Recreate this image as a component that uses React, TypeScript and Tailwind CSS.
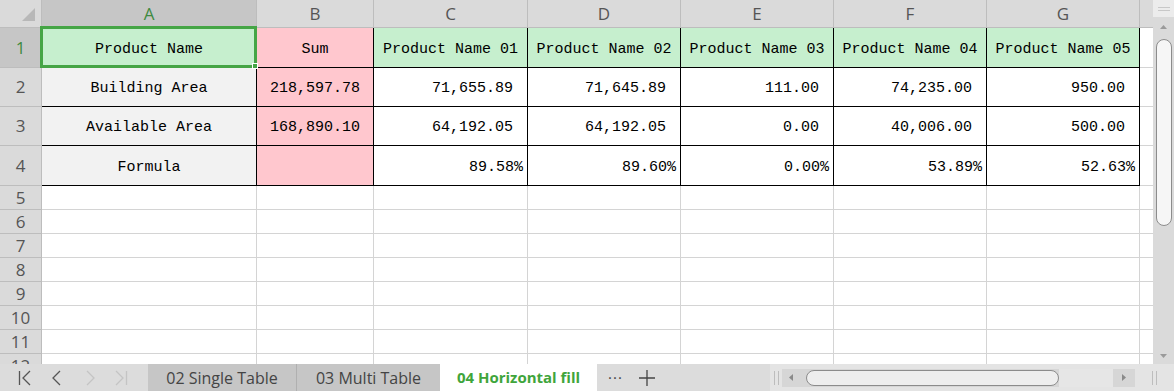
import React from "react";

const cols = [
  { key: "A", w: "w-[215px]" },
  { key: "B", w: "w-[117px]" },
  { key: "C", w: "w-[154px]" },
  { key: "D", w: "w-[153px]" },
  { key: "E", w: "w-[153px]" },
  { key: "F", w: "w-[153px]" },
  { key: "G", w: "w-[153px]" },
];

const products = ["Product Name 01", "Product Name 02", "Product Name 03", "Product Name 04", "Product Name 05"];

const dataRows = [
  { h: "h-[39px]", label: "Building Area", sum: "218,597.78", vals: ["71,655.89", "71,645.89", "111.00", "74,235.00", "950.00"], pct: false },
  { h: "h-[39px]", label: "Available Area", sum: "168,890.10", vals: ["64,192.05", "64,192.05", "0.00", "40,006.00", "500.00"], pct: false },
  { h: "h-[40px]", label: "Formula", sum: "", vals: ["89.58%", "89.60%", "0.00%", "53.89%", "52.63%"], pct: true },
];

const mono = "font-['Liberation_Mono',monospace] text-[15px] text-black pt-[5px]";
const sans = "font-['Open_Sans','Noto_Sans',sans-serif]";

function RowHead({ n, h, active }: { n: number; h: string; active?: boolean }) {
  return (
    <div
      className={`w-[42px] ${h} shrink-0 flex items-center justify-center border-r border-b border-[#bdbdbd] ${sans} text-[17px] ${
        active ? "bg-[#c6c6c6] text-[#3f8a3f]" : "bg-[#dadada] text-[#555]"
      }`}
    >
      {n}
    </div>
  );
}

function Extra({ h }: { h: string }) {
  return <div className={`flex-1 ${h} border-b border-[#d4d4d4]`} />;
}

function EmptyRow({ n }: { n: number }) {
  return (
    <div className="flex">
      <RowHead n={n} h="h-[24px]" />
      {cols.map((c) => (
        <div key={c.key} className={`${c.w} h-[24px] shrink-0 border-r border-b border-[#d4d4d4]`} />
      ))}
      <Extra h="h-[24px]" />
    </div>
  );
}

export default function App() {
  return (
    <div className="w-[1174px] h-[391px] flex flex-col bg-white overflow-hidden">
      <div className="flex h-[364px]">
        {/* Sheet grid */}
        <div className="w-[1153px] h-[364px] overflow-hidden">
          {/* Column headers */}
          <div className="flex h-[28px]">
            <div className="w-[42px] h-[28px] shrink-0 bg-[#dadada] border-r border-b border-[#bdbdbd] relative">
              <svg className="absolute left-[22px] top-[8px]" width="13" height="13" viewBox="0 0 13 13">
                <polygon points="13,0 13,13 0,13" fill="#b8b8b8" />
              </svg>
            </div>
            {cols.map((c) => (
              <div
                key={c.key}
                className={`${c.w} h-[28px] shrink-0 flex items-center justify-center border-r border-b border-[#bdbdbd] ${sans} text-[17px] ${
                  c.key === "A" ? "bg-[#c6c6c6] text-[#3f8a3f]" : "bg-[#dadada] text-[#555]"
                }`}
              >
                {c.key}
              </div>
            ))}
            <div className="flex-1 h-[28px] bg-[#dadada] border-b border-[#bdbdbd]" />
          </div>

          {/* Row 1 */}
          <div className="flex">
            <RowHead n={1} h="h-[40px]" active />
            <div className={`w-[215px] h-[40px] shrink-0 relative bg-[#c6efce] border-r border-b border-black flex items-center justify-center ${mono}`}>
              Product Name
              <div className="absolute -left-[2px] -top-[2px] w-[217px] h-[42px] border-[3px] border-[#45a545]">
                <div className="absolute -right-[4px] -bottom-[4px] w-[6px] h-[6px] bg-[#45a545] border border-white" />
              </div>
            </div>
            <div className={`w-[117px] h-[40px] shrink-0 bg-[#ffc7ce] border-r border-b border-black flex items-center justify-center ${mono}`}>
              Sum
            </div>
            {products.map((p, i) => (
              <div
                key={p}
                className={`${cols[i + 2].w} h-[40px] shrink-0 bg-[#c6efce] border-r border-b border-black flex items-center justify-center ${mono}`}
              >
                {p}
              </div>
            ))}
            <Extra h="h-[40px]" />
          </div>

          {/* Rows 2-4 */}
          {dataRows.map((r, idx) => (
            <div key={r.label} className="flex">
              <RowHead n={idx + 2} h={r.h} />
              <div className={`w-[215px] ${r.h} shrink-0 bg-[#f2f2f2] border-r border-b border-black flex items-center justify-center ${mono}`}>
                {r.label}
              </div>
              <div className={`w-[117px] ${r.h} shrink-0 bg-[#ffc7ce] border-r border-b border-black flex items-center justify-center ${mono}`}>
                {r.sum}
              </div>
              {r.vals.map((v, i) => (
                <div
                  key={i}
                  className={`${cols[i + 2].w} ${r.h} shrink-0 border-r border-b border-black flex items-center justify-end ${
                    r.pct ? "pr-[4px]" : "pr-[14px]"
                  } ${mono}`}
                >
                  {v}
                </div>
              ))}
              <Extra h={r.h} />
            </div>
          ))}

          {[5, 6, 7, 8, 9, 10, 11, 12].map((n) => (
            <EmptyRow key={n} n={n} />
          ))}
        </div>

        {/* Vertical scrollbar */}
        <div className="w-[21px] h-[364px] flex flex-col bg-[#dadada]">
          <div className="h-[17px] bg-[#ececec] flex flex-col items-center justify-center gap-[2px]">
            <div className="w-[12px] h-px bg-[#c8c8c8]" />
            <div className="w-[12px] h-px bg-[#c8c8c8]" />
          </div>
          <div className="flex-1 flex flex-col items-center pt-[8px] pb-[6px]">
            <svg width="7" height="4" viewBox="0 0 7 4">
              <polygon points="3.5,0 7,4 0,4" fill="#9a9a9a" />
            </svg>
            <div className="mt-[10px] w-[16px] h-[187px] rounded-full bg-[#f6f6f6] border border-[#8c8c8c]" />
            <div className="flex-1" />
            <svg width="7" height="4" viewBox="0 0 7 4">
              <polygon points="0,0 7,0 3.5,4" fill="#9a9a9a" />
            </svg>
          </div>
        </div>
      </div>

      {/* Sheet tabs */}
      <div className={`h-[27px] flex items-stretch bg-[#dcdcdc] ${sans}`}>
        <div className="w-[148px] flex items-center">
          <svg className="ml-[18px]" width="14" height="16" viewBox="0 0 14 16" fill="none" stroke="#555" strokeWidth="1.3">
            <path d="M1.5 1v14" />
            <path d="M12 1L5 8l7 7" />
          </svg>
          <svg className="ml-[20px]" width="9" height="16" viewBox="0 0 9 16" fill="none" stroke="#555" strokeWidth="1.3">
            <path d="M8 1L1 8l7 7" />
          </svg>
          <svg className="ml-[25px]" width="9" height="16" viewBox="0 0 9 16" fill="none" stroke="#c4c4c4" strokeWidth="1.3">
            <path d="M1 1l7 7-7 7" />
          </svg>
          <svg className="ml-[19px]" width="14" height="16" viewBox="0 0 14 16" fill="none" stroke="#c4c4c4" strokeWidth="1.3">
            <path d="M2 1l7 7-7 7" />
            <path d="M12.5 1v14" />
          </svg>
        </div>
        <div className="w-[149px] bg-[#c6c6c6] border-r border-[#b0b0b0] flex items-center justify-center text-[16px] text-[#444]">
          02 Single Table
        </div>
        <div className="w-[143px] bg-[#c6c6c6] flex items-center justify-center text-[16px] text-[#444]">
          03 Multi Table
        </div>
        <div className="w-[157px] bg-white flex items-center justify-center text-[15px] font-bold text-[#3fa53b]">
          04 Horizontal fill
        </div>
        <div className="w-[173px] flex items-center">
          <span className="ml-[11px] text-[15px] text-[#444] tracking-[1px] leading-none">···</span>
          <svg className="ml-[16px]" width="16" height="16" viewBox="0 0 16 16" fill="none" stroke="#444" strokeWidth="1.3">
            <path d="M8 0v16M0 8h16" />
          </svg>
        </div>
        {/* Horizontal scrollbar */}
        <div className="flex-1 flex items-center bg-[#e4e4e4]">
          <div className="w-[12px] flex justify-center gap-[3px]">
            <div className="w-px h-[14px] bg-[#bdbdbd]" />
            <div className="w-px h-[14px] bg-[#bdbdbd]" />
          </div>
          <div className="w-[18px] h-[18px] bg-[#d6d6d6] flex items-center justify-center">
            <svg width="4" height="7" viewBox="0 0 4 7">
              <polygon points="4,0 4,7 0,3.5" fill="#8a8a8a" />
            </svg>
          </div>
          <div className="w-[335px] h-[18px] bg-[#d6d6d6] flex items-center pl-[6px]">
            <div className="w-[253px] h-[16px] rounded-full bg-[#eeeeee] border border-[#8c8c8c]" />
            <div className="flex-1 h-[18px] bg-[#e6e6e6]" />
            <div className="w-[22px] h-[18px] flex items-center justify-center">
              <svg width="4" height="7" viewBox="0 0 4 7">
                <polygon points="0,0 4,3.5 0,7" fill="#8a8a8a" />
              </svg>
            </div>
          </div>
          <div className="flex-1 flex justify-center gap-[3px]">
            <div className="w-px h-[14px] bg-[#bdbdbd]" />
            <div className="w-px h-[14px] bg-[#bdbdbd]" />
          </div>
        </div>
      </div>
    </div>
  );
}
